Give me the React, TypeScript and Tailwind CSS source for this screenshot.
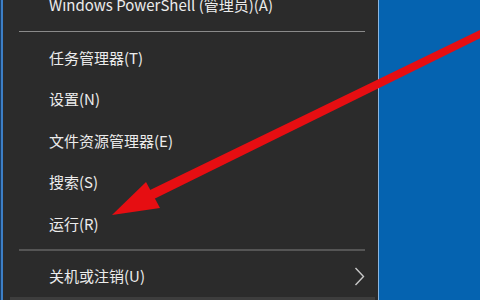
import React from "react";

type Row = { label: string; sub?: boolean };

const TOP: Row[] = [
  { label: "任务管理器(T)" },
  { label: "设置(N)" },
  { label: "文件资源管理器(E)" },
  { label: "搜索(S)" },
  { label: "运行(R)" },
];

function Item({ label, sub }: Row) {
  return (
    <div className="flex h-[41.5px] shrink-0 items-center justify-between pl-[46px] pr-[13px]">
      <span>{label}</span>
      {sub && (
        <svg width="11" height="19" viewBox="0 0 11 19" className="text-[#c8c8c8]">
          <path d="M1.5 1 L9.5 9.5 L1.5 18" fill="none" stroke="currentColor" strokeWidth="1.4" />
        </svg>
      )}
    </div>
  );
}

function Separator({ line }: { line: string }) {
  return (
    <div className="flex h-[11px] shrink-0 items-center pl-[16px] pr-[13px]">
      <div className={`w-full ${line}`} />
    </div>
  );
}

export default function App() {
  return (
    <div className="relative flex h-[300px] w-[480px] overflow-hidden bg-[#0563b0] font-['Microsoft_YaHei','Noto_Sans_CJK_SC',sans-serif] text-[15px] text-[#ececec]">
      {/* left edge of the screen */}
      <div className="w-px shrink-0 bg-[#1b3d63]" />
      <div className="w-[2px] shrink-0 bg-[#3d7fc6]" />

      {/* Win+X menu */}
      <div className="flex w-[375px] shrink-0 flex-col bg-[#2b2b2b]">
        <div className="-mt-[16px] flex h-[42px] shrink-0 items-center pl-[46px]">
          Windows PowerShell (管理员)(A)
        </div>
        <Separator line="h-[1.5px] bg-[#8a8a8a]" />
        {TOP.map((r) => (
          <Item key={r.label} {...r} />
        ))}
        <Separator line="h-[2px] bg-[#555555]" />
        <Item label="关机或注销(U)" sub />
        <div className="ml-[7px] mr-[3px] h-[6px] shrink-0 bg-[#3d3d3d]" />
      </div>
      <div className="w-px shrink-0 bg-[#8db6de]" />

      {/* desktop */}
      <div className="flex-1" />

      {/* red annotation arrow */}
      <svg
        className="pointer-events-none absolute inset-0"
        width="480"
        height="300"
        viewBox="0 0 480 300"
      >
        <polygon points="505,18 505,26 152,200 148,191" fill="#e60e12" />
        <polygon points="112,215 146,182 160,208" fill="#e60e12" />
      </svg>
    </div>
  );
}
